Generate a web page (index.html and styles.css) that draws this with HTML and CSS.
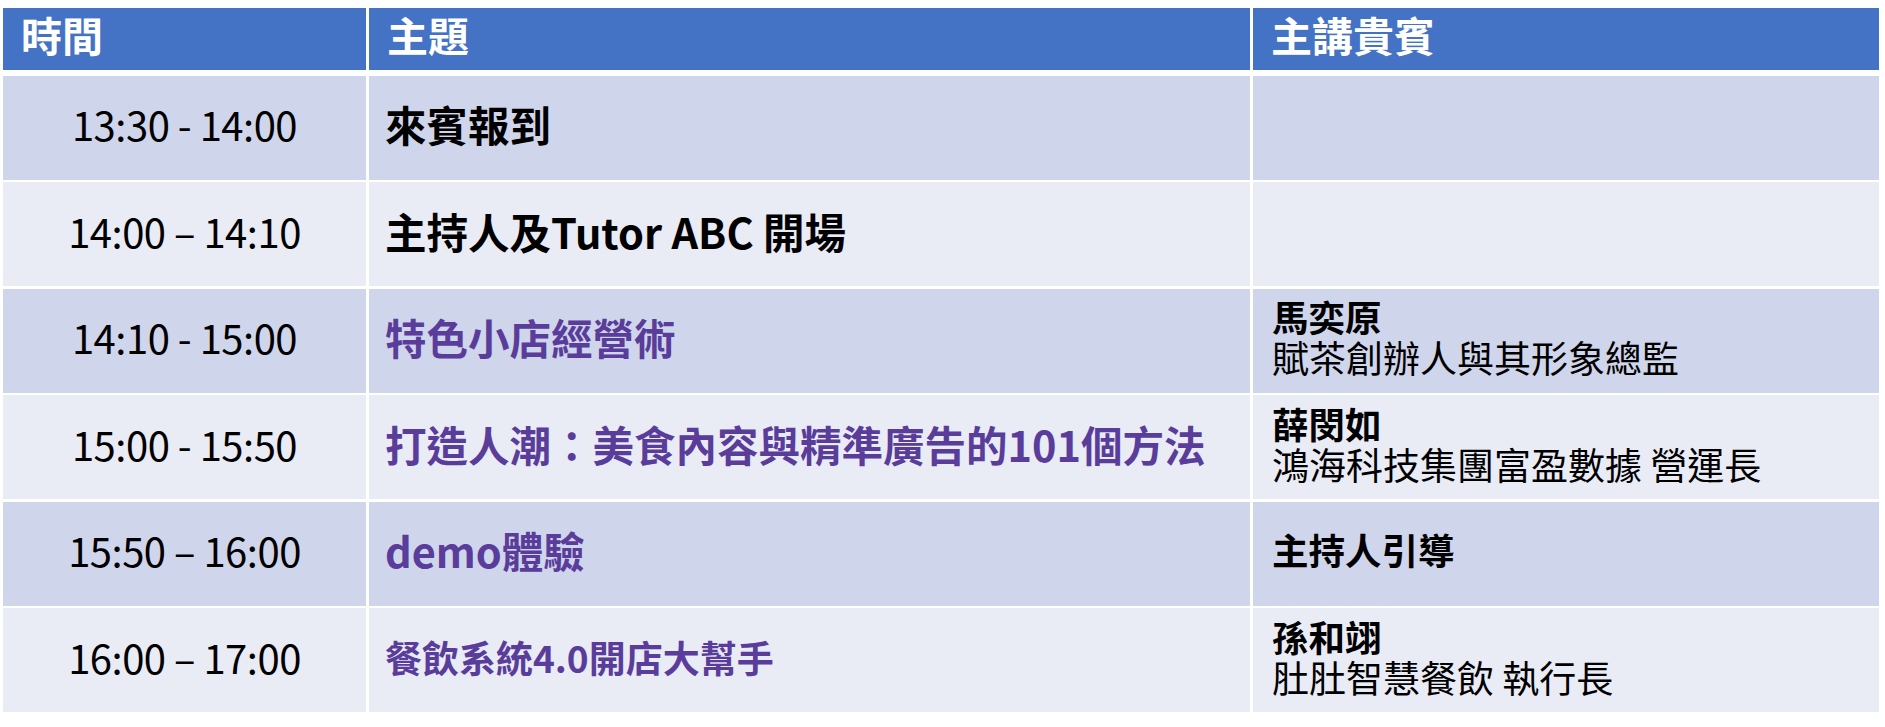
FILE: index.html
```html
<!DOCTYPE html>
<html lang="zh-Hant">
<head>
<meta charset="utf-8">
<title>議程</title>
<link rel="stylesheet" href="styles.css">
</head>
<body>
<div class="schedule">
  <div class="row head">
    <div class="cell">時間</div>
    <div class="cell">主題</div>
    <div class="cell">主講貴賓</div>
  </div>
  <div class="rows">
    <div class="row odd">
      <div class="cell time">13:30 - 14:00</div>
      <div class="cell topic">來賓報到</div>
      <div class="cell speaker"></div>
    </div>
    <div class="row even">
      <div class="cell time">14:00 – 14:10</div>
      <div class="cell topic">主持人及Tutor ABC 開場</div>
      <div class="cell speaker"></div>
    </div>
    <div class="row odd">
      <div class="cell time">14:10 - 15:00</div>
      <div class="cell topic purple">特色小店經營術</div>
      <div class="cell speaker"><div class="name">馬奕原</div><div class="title">賦茶創辦人與其形象總監</div></div>
    </div>
    <div class="row even">
      <div class="cell time">15:00 - 15:50</div>
      <div class="cell topic purple">打造人潮：美食內容與精準廣告的101個方法</div>
      <div class="cell speaker"><div class="name">薛閔如</div><div class="title">鴻海科技集團富盈數據 營運長</div></div>
    </div>
    <div class="row odd">
      <div class="cell time">15:50 – 16:00</div>
      <div class="cell topic purple">demo體驗</div>
      <div class="cell speaker"><div class="name">主持人引導</div></div>
    </div>
    <div class="row even">
      <div class="cell time">16:00 – 17:00</div>
      <div class="cell topic purple small">餐飲系統4.0開店大幫手</div>
      <div class="cell speaker"><div class="name">孫和翊</div><div class="title">肚肚智慧餐飲 執行長</div></div>
    </div>
  </div>
</div>
</body>
</html>
```
FILE: styles.css
```css
* { box-sizing: border-box; }
body {
  margin: 0;
  background: #ffffff;
  font-family: "Noto Sans CJK TC", "Noto Sans", sans-serif;
  color: #000;
}
.schedule {
  margin: 8px 0 0 3px;
  width: 1876px;
}
.row {
  display: grid;
  grid-template-columns: 363px 881px 626px;
  column-gap: 3px;
}
.head {
  height: 62px;
}
.head .cell {
  background: #4472C4;
  color: #fff;
  font-weight: 700;
  font-size: 41px;
  line-height: 1;
  padding-left: 18px;
  display: flex;
  align-items: center;
  padding-bottom: 10px;
}
.rows {
  margin-top: 6px;
  height: 636px;
  display: grid;
  grid-template-rows: repeat(6, 1fr);
  row-gap: 2.5px;
}
.cell {
  display: flex;
  align-items: center;
  padding-bottom: 7px;
}
.odd .cell { background: #CFD5EA; }
.even .cell { background: #E9EBF5; }
.time {
  justify-content: center;
  font-size: 40px;
  letter-spacing: -0.5px;
  font-weight: 400;
}
.topic {
  padding-left: 16px;
  font-size: 41.5px;
  font-weight: 700;
}
.topic.small { font-size: 37px; }
.purple { color: #5A3D9B; }
.speaker {
  padding-left: 19px;
  flex-direction: column;
  align-items: flex-start;
  justify-content: center;
  font-size: 37px;
  line-height: 40px;
}
.name { font-weight: 700; font-size: 36.5px; }
.title { font-weight: 400; }
```
